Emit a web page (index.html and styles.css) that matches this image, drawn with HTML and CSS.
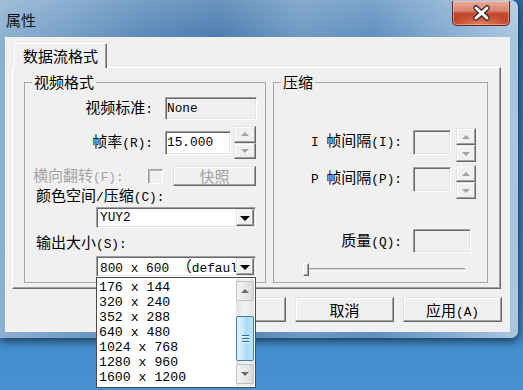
FILE: index.html
```html
<!DOCTYPE html>
<html lang="zh-CN">
<head>
    <meta charset="UTF-8">
    <title>属性</title>
    <link rel="stylesheet" href="styles.css">
</head>
<body>
    <div class="window">
        <div class="title-bar">
            <span class="title">属性</span>
            <div class="close-btn">
                <svg width="19" height="16" viewBox="0 0 19 16">
                    <path d="M4 3 L15 13 M15 3 L4 13" stroke="#3b2a26" stroke-width="5.5" stroke-linecap="round"/>
                    <path d="M4 3 L15 13 M15 3 L4 13" stroke="#fff" stroke-width="3" stroke-linecap="round"/>
                </svg>
            </div>
        </div>
        <div class="client">
            <div class="tab-strip">
                <div class="tab">数据流格式</div>
            </div>
            <div class="tab-page">
                <fieldset class="group group-video">
                    <legend>视频格式</legend>
                    <div class="group-body">
                        <div class="row row-std">
                            <span class="lbl lbl-left-col">视频标准<span class="en">:</span></span>
                            <div class="field field-ro w-std"><span class="en">None</span></div>
                        </div>
                        <div class="row row-fps">
                            <span class="lbl lbl-left-col">帧率<span class="en">(R):</span></span>
                            <div class="field w-fps"><span class="en">15.000</span></div>
                            <div class="spin spin-fps">
                                <div class="spin-btn up"></div>
                                <div class="spin-btn down"></div>
                            </div>
                        </div>
                        <div class="row row-flip">
                            <span class="lbl lbl-flip disabled">横向翻转<span class="en">(F):</span></span>
                            <div class="checkbox"></div>
                            <div class="btn btn-snap disabled">快照</div>
                        </div>
                        <div class="row-label">颜色空间<span class="en">/</span>压缩<span class="en">(C):</span></div>
                        <div class="row row-combo first">
                            <div class="combo">
                                <span class="en combo-text">YUY2</span>
                                <div class="combo-btn"></div>
                            </div>
                        </div>
                        <div class="row-label second">输出大小<span class="en">(S):</span></div>
                        <div class="row row-combo last">
                            <div class="combo">
                                <span class="combo-text"><span class="en">800 x 600 </span>（<span class="en">default</span>）</span>
                                <div class="combo-btn"></div>
                            </div>
                            <!-- liste déroulante ouverte -->
                            <div class="dropdown-list">
                                <div class="items">
                                    <div class="item">176 x 144</div>
                                    <div class="item">320 x 240</div>
                                    <div class="item">352 x 288</div>
                                    <div class="item">640 x 480</div>
                                    <div class="item">1024 x 768</div>
                                    <div class="item">1280 x 960</div>
                                    <div class="item">1600 x 1200</div>
                                </div>
                                <div class="scrollbar">
                                    <div class="sb-btn sb-up"></div>
                                    <div class="sb-thumb">
                                        <span></span><span></span><span></span>
                                    </div>
                                    <div class="sb-btn sb-down"></div>
                                </div>
                            </div>
                        </div>
                    </div>
                </fieldset>
                <fieldset class="group group-comp">
                    <legend>压缩</legend>
                    <div class="group-body">
                        <div class="row row-i">
                            <span class="lbl lbl-right-col"><span class="en">I </span>帧间隔<span class="en">(I):</span></span>
                            <div class="field field-ro w-gap"></div>
                            <div class="spin spin-gap">
                                <div class="spin-btn up"></div>
                                <div class="spin-btn down"></div>
                            </div>
                        </div>
                        <div class="row row-p">
                            <span class="lbl lbl-right-col"><span class="en">P </span>帧间隔<span class="en">(P):</span></span>
                            <div class="field field-ro w-gap"></div>
                            <div class="spin spin-gap">
                                <div class="spin-btn up"></div>
                                <div class="spin-btn down"></div>
                            </div>
                        </div>
                        <div class="row row-q">
                            <span class="lbl lbl-right-col">质量<span class="en">(Q):</span></span>
                            <div class="field field-ro w-q"></div>
                        </div>
                        <div class="slider">
                            <div class="slider-track"></div>
                            <div class="slider-thumb"></div>
                        </div>
                    </div>
                </fieldset>
            </div>
            <div class="buttons">
                <div class="btn btn-dlg">确定</div>
                <div class="btn btn-dlg">取消</div>
                <div class="btn btn-dlg">应用<span class="en">(A)</span></div>
            </div>
        </div>
    </div>
</body>
</html>
```

FILE: styles.css
```css
body {
    margin: 0;
    width: 523px;
    height: 390px;
    overflow: hidden;
    background: linear-gradient(to bottom, #2f6fa6 0%, #3f88c6 80%, #4793d1 100%);
    font-family: "Noto Sans CJK SC", sans-serif;
    font-size: 15px;
    color: #000;
}
.en {
    font-family: "Liberation Mono", monospace;
    font-size: 12.8px;
}
.window {
    width: 518px;
    height: 338px;
    box-sizing: border-box;
    padding: 0 8px 6px 5px;
    display: flex;
    flex-direction: column;
    border-radius: 0 7px 7px 0;
    background:
        linear-gradient(to bottom, rgba(255,255,255,0.18) 0%, rgba(255,255,255,0) 40px),
        linear-gradient(90deg, #8db0d0 0%, #7aa2c9 10%, #5888b8 28%, #4a7cae 42%, #6d98c3 58%, #5f8fbf 72%, #88aed2 88%, #abc7df 100%);
    box-shadow: 1px 3px 9px rgba(0,0,0,0.6);
}
.title-bar {
    height: 37px;
    display: flex;
    justify-content: space-between;
    align-items: flex-start;
    flex-shrink: 0;
}
.title {
    margin: 10px 0 0 1px;
    line-height: 20px;
    font-size: 15px;
    color: #111;
}
.close-btn {
    margin-top: 1px;
    width: 58px;
    height: 25px;
    box-sizing: border-box;
    border: 1px solid #5e2a20;
    border-top: none;
    border-radius: 0 0 5px 5px;
    background:
        radial-gradient(ellipse 60% 45% at 50% 100%, rgba(240,150,110,0.8), rgba(240,150,110,0)),
        linear-gradient(to bottom, #e9ab9c 0%, #dc8672 40%, #c44a31 52%, #b8371e 100%);
    box-shadow: inset 0 0 0 1px rgba(255,220,210,0.45);
    display: flex;
    align-items: center;
    justify-content: center;
}
.client {
    flex: 1;
    background-color: #f0f0f0;
    padding: 6px 9px 0 7px;
    display: flex;
    flex-direction: column;
}
.tab-strip {
    display: flex;
    padding-left: 2px;
    height: 25px;
    margin-bottom: -1px;
    position: relative;
    z-index: 1;
}
.tab {
    width: 93px;
    box-sizing: border-box;
    border: 1px solid;
    border-color: #fff #696969 transparent #fff;
    border-bottom: none;
    border-radius: 2px 2px 0 0;
    box-shadow: inset -1px 0 0 #a0a0a0;
    background-color: #f0f0f0;
    text-align: center;
    line-height: 23px;
}
.tab-page {
    height: 222px;
    box-sizing: border-box;
    border: 1px solid;
    border-color: #fff #696969 #696969 #fff;
    box-shadow: inset -1px -1px 0 #a0a0a0;
    padding: 5px 12px 5px 11px;
    display: flex;
    gap: 7px;
}
.group {
    margin: 0;
    padding: 0;
    min-width: 0;
    box-sizing: border-box;
    border: 1px solid #a7a7a7;
}
.group legend {
    margin-left: 7px;
    padding: 0 2px;
    line-height: 18px;
    font-size: 15px;
}
.group-video {
    width: 242px;
}
.group-comp {
    width: 215px;
}
.group-body {
    display: flex;
    flex-direction: column;
}
.row {
    display: flex;
    align-items: center;
}
.lbl {
    line-height: 20px;
    white-space: nowrap;
}
.lbl-left-col {
    width: 128px;
    margin-right: 12px;
    text-align: right;
}
.lbl-right-col {
    width: 128px;
    margin-right: 11px;
    text-align: right;
}
.disabled {
    color: #a3a3a3;
}

/* champs de saisie */
.field {
    box-sizing: border-box;
    border: 1px solid;
    border-color: #a0a0a0 #fff #fff #a0a0a0;
    box-shadow: inset 1px 1px 0 #696969, inset -1px -1px 0 #e3e3e3;
    background-color: #fff;
    padding-left: 1px;
    display: flex;
    align-items: center;
}
.field-ro {
    background-color: #f0f0f0;
}
.w-std { width: 92px; height: 23px; }
.w-fps { width: 66px; height: 24px; }
.w-gap { width: 38px; height: 25px; }
.w-q { width: 58px; height: 24px; }

.spin {
    display: flex;
    flex-direction: column;
}
.spin-btn {
    flex: 1;
    box-sizing: border-box;
    border: 1px solid;
    border-color: #e3e3e3 #696969 #696969 #e3e3e3;
    box-shadow: inset -1px -1px 0 #a0a0a0, inset 1px 1px 0 #fff;
    background-color: #f0f0f0;
    display: flex;
    align-items: center;
    justify-content: center;
}
.spin-btn.up::after {
    content: "";
    border-left: 4px solid transparent;
    border-right: 4px solid transparent;
    border-bottom: 4px solid #a3a3a3;
}
.spin-btn.down::after {
    content: "";
    border-left: 4px solid transparent;
    border-right: 4px solid transparent;
    border-top: 4px solid #a3a3a3;
}
.spin-fps {
    width: 22px;
    height: 33px;
    margin-left: 3px;
}
.spin-gap {
    width: 20px;
    height: 34px;
    margin-left: 5px;
}

.row-std {
    margin-top: 6px;
    height: 23px;
}
.row-fps {
    margin-top: 6px;
    height: 33px;
}
.row-flip {
    margin-top: 7px;
    height: 20px;
}
.lbl-flip {
    width: 115px;
    margin-left: 8px;
}
.checkbox {
    width: 15px;
    height: 15px;
    box-sizing: border-box;
    border: 1px solid;
    border-color: #a0a0a0 #fff #fff #a0a0a0;
    box-shadow: inset 1px 1px 0 #b5b5b5;
    background-color: #f0f0f0;
}
.btn {
    box-sizing: border-box;
    border: 1px solid;
    border-color: #e3e3e3 #696969 #696969 #e3e3e3;
    box-shadow: inset -1px -1px 0 #a0a0a0, inset 1px 1px 0 #fff;
    background-color: #f0f0f0;
    text-align: center;
}
.btn-snap {
    width: 83px;
    height: 20px;
    line-height: 18px;
    margin-left: 10px;
}
.row-label {
    height: 17px;
    line-height: 17px;
    padding-left: 11px;
    white-space: nowrap;
}
.row-label.second {
    margin-top: 5px;
}
.row-combo {
    margin-left: 71px;
    position: relative;
}
.row-combo.first {
    margin-top: 4px;
}
.row-combo.last {
    margin-top: 6px;
}
.combo {
    width: 160px;
    height: 21px;
    box-sizing: border-box;
    border: 1px solid;
    border-color: #a0a0a0 #fff #fff #a0a0a0;
    box-shadow: inset 1px 1px 0 #696969, inset -1px -1px 0 #e3e3e3;
    background-color: #fff;
    display: flex;
    align-items: center;
    overflow: hidden;
}
.combo-text {
    flex: 1;
    padding-left: 3px;
    white-space: nowrap;
    overflow: hidden;
    line-height: 17px;
}
.combo-btn {
    width: 18px;
    height: 17px;
    margin-right: 1px;
    flex-shrink: 0;
    box-sizing: border-box;
    border: 1px solid;
    border-color: #e3e3e3 #696969 #696969 #e3e3e3;
    box-shadow: inset -1px -1px 0 #a0a0a0, inset 1px 1px 0 #fff;
    background-color: #f0f0f0;
    display: flex;
    align-items: center;
    justify-content: center;
}
.combo-btn::after {
    content: "";
    border-left: 5px solid transparent;
    border-right: 5px solid transparent;
    border-top: 5px solid #000;
    margin-top: 1px;
}

/* liste déroulante */
.dropdown-list {
    position: absolute;
    top: 100%;
    left: 0;
    width: 160px;
    height: 111px;
    box-sizing: border-box;
    border: 1px solid #4a4a4a;
    background-color: #fff;
    display: flex;
    z-index: 5;
}
.items {
    flex: 1;
    padding: 2px 0 0 2px;
    font-family: "Liberation Mono", monospace;
    font-size: 13.2px;
}
.item {
    line-height: 15px;
    white-space: nowrap;
}
.scrollbar {
    width: 18px;
    margin: 1px 1px 1px 0;
    padding-top: 2px;
    display: flex;
    flex-direction: column;
    background: linear-gradient(90deg, #e2e2e2, #f2f2f2 40%, #f2f2f2 60%, #e2e2e2);
}
.sb-btn {
    height: 20px;
    box-sizing: border-box;
    border: 1px solid #c3c3c3;
    border-radius: 2px;
    background: linear-gradient(90deg, #f3f3f3, #e8e8e8 50%, #d9d9d9);
    display: flex;
    align-items: center;
    justify-content: center;
}
.sb-up::after {
    content: "";
    border-left: 4px solid transparent;
    border-right: 4px solid transparent;
    border-bottom: 4px solid #6b6b6b;
}
.sb-down {
    margin-top: 3px;
}
.sb-down::after {
    content: "";
    border-left: 4px solid transparent;
    border-right: 4px solid transparent;
    border-top: 4px solid #6b6b6b;
}
.sb-thumb {
    margin-top: 15px;
    height: 45px;
    box-sizing: border-box;
    border: 1px solid #3c7fb1;
    border-radius: 2px;
    background: linear-gradient(90deg, #e3f4fc, #c4e6f9 45%, #a9d9f5 55%, #bde3f8);
    display: flex;
    flex-direction: column;
    align-items: center;
    justify-content: center;
    gap: 2px;
}
.sb-thumb span {
    width: 7px;
    height: 1px;
    background-color: #2e6a98;
    box-shadow: 0 1px 0 #eaf6fd;
}

/* groupe compression */
.row-i,
.row-p {
    align-items: flex-start;
    height: 34px;
}
.row-i {
    margin-top: 37px;
}
.row-p {
    margin-top: 3px;
}
.row-i .lbl,
.row-p .lbl {
    line-height: 23px;
    margin-top: 0;
}
.row-i .field,
.row-p .field {
    margin-top: 2px;
}
.row-q {
    margin-top: 30px;
    height: 24px;
}
.slider {
    margin: 9px 0 0 29px;
    width: 162px;
    height: 15px;
    position: relative;
    display: flex;
    align-items: center;
}
.slider-track {
    width: 100%;
    height: 3px;
    box-sizing: border-box;
    border-top: 1px solid #a0a0a0;
    border-bottom: 1px solid #fff;
    background-color: #d4d4d4;
}
.slider-thumb {
    position: absolute;
    left: 0;
    top: 1px;
    width: 6px;
    height: 13px;
    box-sizing: border-box;
    border: 1px solid;
    border-color: #fff #696969 #696969 #fff;
    box-shadow: inset -1px -1px 0 #a0a0a0;
    background-color: #f0f0f0;
}

/* boutons du bas */
.buttons {
    display: flex;
    justify-content: flex-end;
    gap: 9px;
    margin: 8px -1px 0 0;
}
.btn-dlg {
    width: 99px;
    height: 25px;
    line-height: 23px;
}
```
